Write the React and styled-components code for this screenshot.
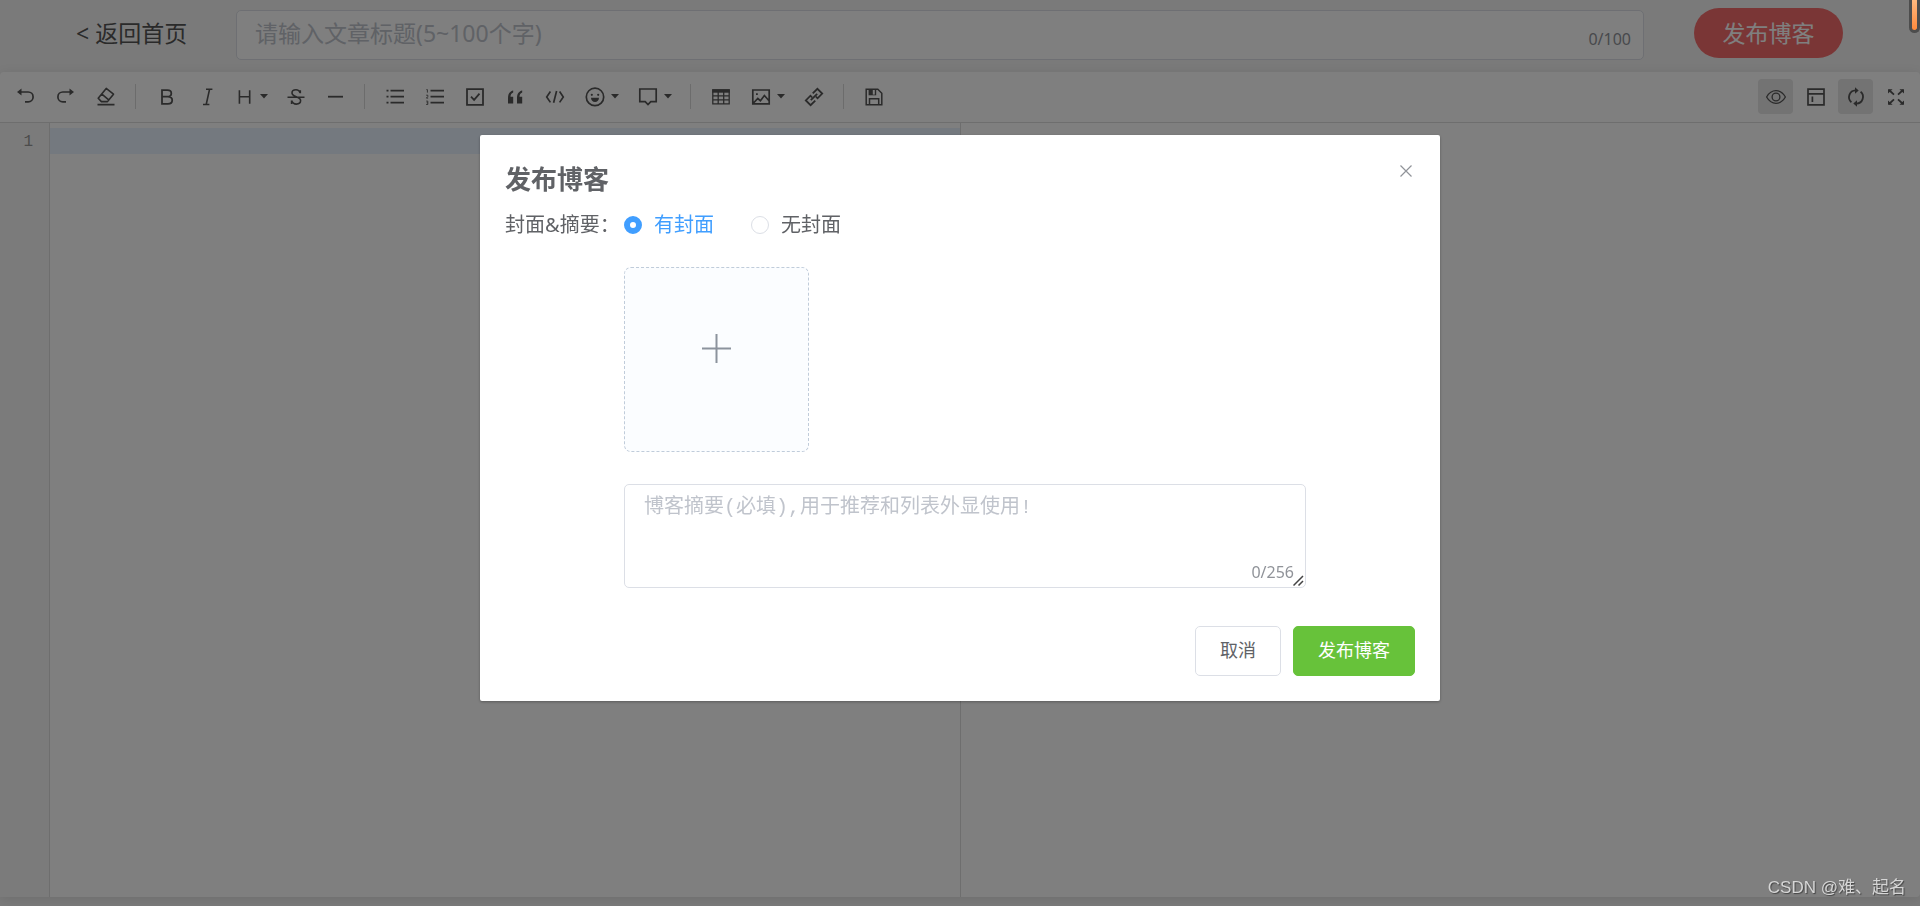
import React, { useState } from 'react';
import styled, { createGlobalStyle, css } from 'styled-components';

const GlobalStyle = createGlobalStyle`
    * {
        box-sizing: border-box;
    }

    body {
        margin: 0;
        background: #F4F4F4;
        font-family: "Noto Sans", "Noto Sans CJK SC", sans-serif;
        color: #606266;
        overflow: hidden;
    }

    button, input {
        font-family: inherit;
    }
`;

const Page = styled.div`
    display: flex;
    flex-direction: column;
    height: 100vh;
    padding-bottom: 9px;
`;

const Header = styled.header`
    display: flex;
    align-items: center;
    flex-shrink: 0;
    height: 72px;
    padding: 0 77px 6px 76px;
`;

const BackLink = styled.a`
    flex-shrink: 0;
    width: 160px;
    color: #555;
    font-size: 23px;
    line-height: 32px;
    text-decoration: none;
`;

const TitleBox = styled.label`
    display: flex;
    align-items: center;
    flex: 1;
    height: 50px;
    margin-top: 4px;
    padding: 0 12px 4px 18px;
    border: 1px solid #DCDFE6;
    border-radius: 5px;
    background: #FFF;
`;

const TitleInput = styled.input`
    flex: 1;
    border: none;
    outline: none;
    padding: 0;
    background: transparent;
    color: #606266;
    font-size: 23px;
    line-height: 32px;

    &::placeholder {
        color: #C0C4CC;
    }
`;

const Count = styled.span`
    color: #909399;
    font-size: 16px;
    line-height: 20px;
`;

const TitleCount = styled(Count)`
    align-self: flex-end;
    margin-bottom: 6px;
`;

const PublishButton = styled.button`
    flex-shrink: 0;
    width: 149px;
    height: 50px;
    margin: 0 0 0 50px;
    padding: 0;
    border: none;
    border-radius: 25px;
    background: #F56C6C;
    color: #FFF;
    font-size: 23px;
    line-height: 32px;
    cursor: pointer;
`;

const Editor = styled.main`
    display: flex;
    flex-direction: column;
    flex: 1;
    border-radius: 4px;
    background: #FFF;
    box-shadow: 0 2px 12px 0 rgba(0, 0, 0, 0.1);
`;

const Toolbar = styled.div`
    display: flex;
    justify-content: space-between;
    align-items: center;
    height: 51px;
    padding: 0 7px 1px 8px;
    border-bottom: 1px solid #DDD;
`;

const ToolGroup = styled.div`
    display: flex;
    align-items: center;
    gap: 5px;
`;

const ToolButton = styled.button`
    display: flex;
    align-items: center;
    justify-content: ${({ $menu }) => ($menu ? 'flex-start' : 'center')};
    gap: 6px;
    width: ${({ $menu }) => ($menu === 'small' ? 44 : $menu ? 48 : 35)}px;
    height: 35px;
    padding: ${({ $menu }) => ($menu ? '0 8px' : '0')};
    border: none;
    border-radius: 4px;
    background: ${({ $active }) => ($active ? '#E6E6E6' : 'transparent')};
    color: #555;
    cursor: pointer;

    svg {
        flex-shrink: 0;
    }
`;

const Divider = styled.span`
    width: 1px;
    height: 25px;
    margin: 0 7px;
    background: #D9D9D9;
`;

const Panes = styled.div`
    display: grid;
    grid-template-columns: 1fr 1fr;
    flex: 1;
`;

const Source = styled.div`
    display: flex;
`;

const Preview = styled.div`
    border-left: 1px solid #DDD;
`;

const Gutter = styled.div`
    width: 50px;
    padding: 6px 16px 0 0;
    border-right: 1px solid #DDD;
    background: #F7F7F7;
    color: #999;
    font-family: "Liberation Mono", monospace;
    font-size: 16px;
    line-height: 26px;
    text-align: right;
`;

const CodeArea = styled.div`
    flex: 1;
    padding-top: 5px;
`;

const ActiveLine = styled.div`
    height: 26px;
    background: #E8F2FF;
`;

const ModalOverlay = styled.div`
    position: fixed;
    inset: 0;
    background: rgba(0, 0, 0, 0.5);
    z-index: 1000;
    padding-top: 135px;
`;

const Dialog = styled.section`
    width: 50%;
    margin: 0 auto;
    padding: 25px;
    border-radius: 2px;
    background: #FFF;
    box-shadow: 0 1px 3px rgba(0, 0, 0, 0.3);
`;

const DialogHeader = styled.div`
    display: flex;
    justify-content: space-between;
    align-items: flex-start;
    height: 50px;
`;

const DialogTitle = styled.h1`
    margin: 0;
    font-size: 26px;
    font-weight: 700;
    line-height: 38px;
`;

const CloseButton = styled.button`
    display: flex;
    padding: 2px 3px;
    border: none;
    background: transparent;
    color: #909399;
    cursor: pointer;
`;

const FormRow = styled.div`
    display: grid;
    grid-template-columns: 119px 1fr;
    align-items: start;
    font-size: 20px;
    line-height: 30px;
`;

const FormBody = styled.div`
    grid-column: 2;
`;

const RadioGroup = styled.div`
    display: flex;
    align-items: center;
    gap: 37px;
`;

const RadioLabel = styled.label`
    display: flex;
    align-items: center;
    gap: 12px;
    color: ${({ $checked }) => ($checked ? '#409EFF' : '#606266')};
    cursor: pointer;
`;

const Radio = styled.input`
    appearance: none;
    width: 18px;
    height: 18px;
    margin: 0;
    border: 1px solid #DCDFE6;
    border-radius: 50%;
    background: #FFF;

    &:checked {
        border: 6px solid #409EFF;
    }
`;

const UploadCard = styled.button`
    display: flex;
    justify-content: center;
    align-items: center;
    width: 185px;
    height: 185px;
    margin-top: 27px;
    padding: 0 0 22px;
    border: 1px dashed #C0CCDA;
    border-radius: 7px;
    background: #FBFDFF;
    color: #8C939D;
    cursor: pointer;
`;

const SummaryBox = styled.div`
    display: flex;
    position: relative;
    width: 682px;
    max-width: 100%;
    margin-top: 32px;
`;

const Summary = styled.textarea`
    width: 100%;
    height: 104px;
    padding: 8px 19px;
    border: 1px solid #DCDFE6;
    border-radius: 5px;
    outline: none;
    color: #606266;
    font-family: "Liberation Mono", "Noto Sans CJK SC", monospace;
    font-size: 20px;
    line-height: 30px;
    resize: vertical;

    &::placeholder {
        color: #C0C4CC;
    }
`;

const SummaryCount = styled(Count)`
    position: absolute;
    right: 12px;
    bottom: 6px;
    background: #FFF;
`;

const ResizeGrip = styled.svg`
    position: absolute;
    right: 2px;
    bottom: 2px;
    background: #FFF;
    color: #444;
    pointer-events: none;
`;

const DialogFooter = styled.div`
    display: flex;
    justify-content: flex-end;
    gap: 12px;
    margin-top: 38px;
`;

const DialogButton = styled.button`
    height: 50px;
    padding: 0 24px 2px;
    border: 1px solid #DCDFE6;
    border-radius: 5px;
    background: #FFF;
    color: #606266;
    font-size: 18px;
    line-height: 26px;
    cursor: pointer;

    ${({ $success }) => $success && css`
        border-color: #67C23A;
        background: #67C23A;
        color: #FFF;
    `}
`;

const ScrollThumb = styled.div`
    position: fixed;
    top: 0;
    right: 0;
    z-index: 1100;
    width: 11px;
    height: 33px;
    border: 3px solid #4D4D4D;
    border-top: none;
    border-radius: 0 0 6px 6px;
    background: linear-gradient(#FFB980, #FF8A3D);
`;

const Watermark = styled.div`
    position: fixed;
    right: 14px;
    bottom: 6px;
    z-index: 1100;
    color: #D6D6D6;
    font-family: "Liberation Sans", "Noto Sans CJK SC", sans-serif;
    font-size: 17px;
    line-height: 24px;
    text-shadow: 1px 1px 1px #444;
`;

const line = { fill: 'none', stroke: 'currentColor', strokeWidth: 1.7 };

const icons = {
    undo: (
        <>
            <path d="M4 5h8.2a4.9 4.9 0 0 1 0 9.8H9" {...line} />
            <path d="M1 5 5.5 1.5v7z" fill="currentColor" />
        </>
    ),
    redo: (
        <>
            <path d="M15 5H6.8a4.9 4.900 0 0 0 0 9.800H10" {...line} />
            <path d="M18 5 13.500 1.500v7z" fill="currentColor" />
        </>
    ),
    eraser: (
        <path d="M10.200 1.400 17.500 7.200 11.500 14.600H5.400L2.200 11.200zM5.600 6.800l7.100 6M1.500 17.600h17" {...line} strokeWidth="1.600" strokeLinejoin="round" />
    ),
    bold: <path d="M6 3.200h5.400q3.900 0 3.900 3.200t-3.900 3.200H6h5.800q4.400 0 4.400 3.600t-4.400 3.600H6z" {...line} strokeWidth="1.800" />,
    italic: <path d="M10 2.200h6.400M7 17.500h6.400M13.600 2.200 10.200 17.500" {...line} strokeWidth="1.600" />,
    heading: <path d="M3.800 2.600v14.800M15.200 2.600v14.800M3.800 9.700h11.400" {...line} strokeWidth="1.800" />,
    strike: (
        <path d="M15.300 6.300V3.200M15.100 5.800C14.400 3.600 12.900 2.800 11 2.800c-2.400 0-4 1.300-4 3.200 0 4.400 8.600 3 8.600 7.600 0 2.100-1.700 3.500-4.300 3.500-2.400 0-3.900-1.200-4.700-3.600M6.600 17v-3.400M2.500 10.200h17" {...line} strokeWidth="1.600" />
    ),
    hr: <path d="M3 9.700h15" {...line} strokeWidth="1.800" />,
    ul: (
        <path d="M1.500 3.700h2M1.500 9.700h2M1.500 15.700h2M5.500 3.700H19M5.500 9.700H19M5.500 15.700H19" {...line} />
    ),
    ol: (
        <>
            <path d="M5.500 3.700H19M5.500 9.700H19M5.500 15.700H19" {...line} />
            <path d="M1.400 2.600h1v3M1.200 8.200h1.600v1.300l-1.400 1.600h1.800M1.200 14.100h1.600v3.400H1.200M1.600 15.800h1.200" {...line} strokeWidth="0.900" />
        </>
    ),
    check: <path d="M2 2.200h16v15.600H2zM6 9.600l3.100 3.300 5.400-6.200" {...line} strokeWidth="1.800" />,
    quote: (
        <path d="M8.200 3.400v2C6.400 6 5.600 7.600 5.500 9.800h2.700v6.800H3V11c0-4 1.700-6.900 5.200-7.600zM17.200 3.400v2c-1.800.6-2.600 2.200-2.700 4.400h2.700v6.800H12V11c0-4 1.700-6.900 5.200-7.600z" fill="currentColor" />
    ),
    code: <path d="M5.400 4.500 1.700 9.900l3.700 5.500M14.600 4.500l3.700 5.400-3.700 5.500M11.600 4 8.600 15.800" {...line} />,
    emoji: (
        <>
            <circle cx="10" cy="9.900" r="8.700" {...line} />
            <circle cx="6.800" cy="7.800" r="1.100" fill="currentColor" />
            <circle cx="13.200" cy="7.800" r="1.100" fill="currentColor" />
            <path d="M6 10.800h8c0 2.600-1.700 4.200-4 4.200s-4-1.600-4-4.200z" fill="currentColor" />
        </>
    ),
    tip: <path d="M1.800 2h16.400v12.600h-5.400L10 17.500l-2.800-2.900H1.800z" {...line} />,
    table: (
        <>
            <path d="M1.800 2.800h16.400v14H1.800zM2 8.900h16M2 12.800h16M7.200 5v12M12.700 5v12" {...line} strokeWidth="1.300" />
            <path d="M1.200 2.300h17.600v3.400H1.200z" fill="currentColor" />
        </>
    ),
    image: (
        <>
            <path d="M1.800 3h16.400v13.800H1.800zM2.500 16l4.300-4.500 2.600 2.200 4-5.200 4.600 5.200" {...line} />
            <path d="M5 6.200h1.800v1.800H5z" fill="currentColor" />
        </>
    ),
    link: (
        <g transform="rotate(-45 10 10)">
            <path d="M8.400 13.400H1.800V6.600h6.600v2.200M11.600 6.600h6.600v6.800h-6.600v-2.200M5.500 10h9" {...line} strokeWidth="1.800" />
        </g>
    ),
    save: (
        <>
            <path d="M2.200 2.200h11.600l4 4v11.600H2.200zM5.500 17.500v-5.700h9.200v5.700" {...line} strokeWidth="1.500" />
            <path d="M4.600 2.500h7.600v5.800H4.600z" fill="currentColor" />
            <path d="M9.800 3v4.600" stroke="#FFF" strokeWidth="2" />
        </>
    ),
    eye: (
        <>
            <path d="M.6 10C3 5.900 6.200 3.700 10 3.700s7 2.200 9.400 6.300c-2.400 4.100-5.600 6.300-9.400 6.300S3 14.100.6 10z" {...line} strokeWidth="1.300" />
            <circle cx="10" cy="10" r="3.900" {...line} strokeWidth="1.300" />
        </>
    ),
    layout: <path d="M2 2.200h16v15.600H2zM2 6.800h16M6.400 9.500v5.500" {...line} />,
    sync: (
        <>
            <path d="M5.400 15.200A6.700 6.700 0 0 1 9.500 3.400M14.600 4.800a6.700 6.700 0 0 1-4.100 11.800" {...line} strokeWidth="1.800" />
            <path d="M9 .2 12.700 3.500 9 6.800zM11 13.200 7.300 16.500l3.700 3.300z" fill="currentColor" />
        </>
    ),
    expand: (
        <>
            <path d="m3 3 5 4.700M17 3l-5 4.700M3 17l5-4.700M17 17l-5-4.700" {...line} strokeWidth="1.800" />
            <path d="M2 2.200h4.600L2 6.600zM18 2.200h-4.600L18 6.600zM2 17.800h4.600L2 13.400zM18 17.800h-4.600l4.600-4.400z" fill="currentColor" />
        </>
    ),
};

const leftTools = [
    { icon: 'undo', label: '撤销' },
    { icon: 'redo', label: '重做' },
    { icon: 'eraser', label: '清空' },
    null,
    { icon: 'bold', label: '粗体' },
    { icon: 'italic', label: '斜体' },
    { icon: 'heading', label: '标题', menu: 'small' },
    { icon: 'strike', label: '删除线' },
    { icon: 'hr', label: '分割线' },
    null,
    { icon: 'ul', label: '无序列表' },
    { icon: 'ol', label: '有序列表' },
    { icon: 'check', label: '任务列表' },
    { icon: 'quote', label: '引用' },
    { icon: 'code', label: '代码' },
    { icon: 'emoji', label: '表情', menu: 'normal' },
    { icon: 'tip', label: '提示', menu: 'normal' },
    null,
    { icon: 'table', label: '表格' },
    { icon: 'image', label: '图片', menu: 'normal' },
    { icon: 'link', label: '链接' },
    null,
    { icon: 'save', label: '保存' },
];

const rightTools = [
    { icon: 'eye', label: '预览', active: true },
    { icon: 'layout', label: '目录' },
    { icon: 'sync', label: '同步滚动', active: true },
    { icon: 'expand', label: '全屏' },
];

function Tool({ icon, label, menu, active }) {
    const size = menu === 'small' ? 18 : 20;

    return (
        <ToolButton type="button" aria-label={label} $menu={menu} $active={active}>
            <svg width={size} height={size} viewBox="0 0 20 20">{icons[icon]}</svg>
            {menu && (
                <svg width="8" height="5" viewBox="0 0 8 5">
                    <path d="M0 0h8L4 4.500z" fill="currentColor" />
                </svg>
            )}
        </ToolButton>
    );
}

function App() {
    const [title, setTitle] = useState('');
    const [summary, setSummary] = useState('');
    const [cover, setCover] = useState('with');

    return (
        <>
            <GlobalStyle />
            <Page>
                <Header>
                    <BackLink href="#">&lt; 返回首页</BackLink>
                    <TitleBox>
                        <TitleInput
                            aria-label="文章标题"
                            placeholder="请输入文章标题(5~100个字)"
                            maxLength={100}
                            value={title}
                            onChange={(e) => setTitle(e.target.value)}
                        />
                        <TitleCount>{title.length}/100</TitleCount>
                    </TitleBox>
                    <PublishButton type="button">发布博客</PublishButton>
                </Header>
                <Editor>
                    <Toolbar>
                        <ToolGroup>
                            {leftTools.map((tool, i) => (
                                tool ? <Tool key={tool.icon} {...tool} /> : <Divider key={i} />
                            ))}
                        </ToolGroup>
                        <ToolGroup>
                            {rightTools.map((tool) => <Tool key={tool.icon} {...tool} />)}
                        </ToolGroup>
                    </Toolbar>
                    <Panes>
                        <Source>
                            <Gutter>1</Gutter>
                            <CodeArea>
                                <ActiveLine />
                            </CodeArea>
                        </Source>
                        <Preview />
                    </Panes>
                </Editor>
            </Page>

            <ModalOverlay>
                <Dialog role="dialog" aria-labelledby="dialog-title">
                    <DialogHeader>
                        <DialogTitle id="dialog-title">发布博客</DialogTitle>
                        <CloseButton type="button" aria-label="关闭">
                            <svg width="12" height="18" viewBox="0 0 12 18">
                                <path d="m.5 3.500 11 11M11.500 3.500l-11 11" {...line} strokeWidth="1.200" />
                            </svg>
                        </CloseButton>
                    </DialogHeader>
                    <FormRow>
                        <span id="cover-label">封面&amp;摘要：</span>
                        <RadioGroup role="radiogroup" aria-labelledby="cover-label">
                            <RadioLabel $checked={cover === 'with'}>
                                <Radio type="radio" name="cover" checked={cover === 'with'} onChange={() => setCover('with')} />
                                有封面
                            </RadioLabel>
                            <RadioLabel $checked={cover === 'none'}>
                                <Radio type="radio" name="cover" checked={cover === 'none'} onChange={() => setCover('none')} />
                                无封面
                            </RadioLabel>
                        </RadioGroup>
                        <FormBody>
                            <UploadCard type="button" aria-label="上传封面">
                                <svg width="29" height="29" viewBox="0 0 29 29">
                                    <path d="M14.500 0v29M0 14.500h29" {...line} strokeWidth="2" />
                                </svg>
                            </UploadCard>
                            <SummaryBox>
                                <Summary
                                    aria-label="博客摘要"
                                    placeholder="博客摘要(必填),用于推荐和列表外显使用!"
                                    maxLength={256}
                                    value={summary}
                                    onChange={(e) => setSummary(e.target.value)}
                                />
                                <SummaryCount>{summary.length}/256</SummaryCount>
                                <ResizeGrip width="11" height="11" viewBox="0 0 11 11">
                                    <path d="M.5 10.500 10 1M5.500 10.500 10 6" {...line} strokeWidth="1.500" />
                                </ResizeGrip>
                            </SummaryBox>
                        </FormBody>
                    </FormRow>
                    <DialogFooter>
                        <DialogButton type="button">取消</DialogButton>
                        <DialogButton type="button" $success>发布博客</DialogButton>
                    </DialogFooter>
                </Dialog>
            </ModalOverlay>

            <ScrollThumb />
            <Watermark>CSDN @难、起名</Watermark>
        </>
    );
}

export default App;
